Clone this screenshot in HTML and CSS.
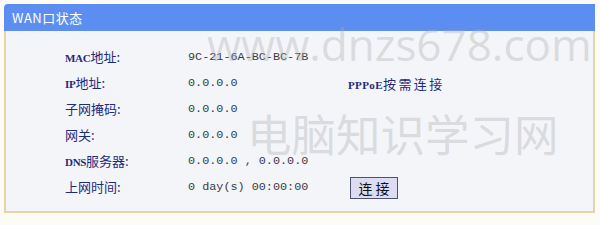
FILE: index.html
```html
<!DOCTYPE html>
<html lang="zh-CN">
<head>
<meta charset="utf-8">
<title>WAN口状态</title>
<link rel="stylesheet" href="styles.css">
</head>
<body>
<div class="panel">
  <div class="header">WAN口状态</div>
  <div class="content">
    <div class="grid">
      <div class="label"><span class="ascii">MAC</span>地址:</div>
      <div class="value">9C-21-6A-BC-BC-7B</div>
      <div class="extra"></div>

      <div class="label"><span class="ascii">IP</span>地址:</div>
      <div class="value">0.0.0.0</div>
      <div class="extra note"><span class="ascii">PPPoE</span>按需连接</div>

      <div class="label">子网掩码:</div>
      <div class="value">0.0.0.0</div>
      <div class="extra"></div>

      <div class="label">网关:</div>
      <div class="value">0.0.0.0</div>
      <div class="extra"></div>

      <div class="label"><span class="ascii">DNS</span>服务器:</div>
      <div class="value">0.0.0.0 , 0.0.0.0</div>
      <div class="extra"></div>

      <div class="label">上网时间:</div>
      <div class="value">0 day(s) 00:00:00</div>
      <div class="extra"><button class="btn" type="button">连 接</button></div>
    </div>
  </div>
  <div class="watermark wm-url">www.dnzs678.com</div>
  <div class="watermark wm-cn">电脑知识学习网</div>
</div>
</body>
</html>
```

FILE: styles.css
```css
* { box-sizing: border-box; }

html, body {
  margin: 0;
  padding: 0;
  background: #fdfbf5;
  width: 600px;
  height: 225px;
  overflow: hidden;
}

body {
  padding: 4px 0 0 4px;
  font-family: "Noto Sans CJK SC", "Liberation Sans", sans-serif;
}

.panel {
  position: relative;
  width: 591px;
  overflow: hidden;
}

.header {
  height: 27px;
  background: #5b8ef0;
  color: #ffffff;
  font-size: 13px;
  line-height: 27px;
  padding-left: 8px;
  border-radius: 4px 0 0 0;
  letter-spacing: 0.5px;
}

.content {
  height: 182px;
  background: #f4f5f9;
  border: 2px solid #e6d4aa;
  border-top: 0;
  padding: 13px 0 0 59px;
}

.grid {
  display: grid;
  grid-template-columns: 123px 160px 1fr;
  grid-auto-rows: 26px;
  align-items: center;
}

.label {
  font-size: 13px;
  color: #1f2b7a;
  line-height: 26px;
}

.ascii {
  font-family: "Liberation Serif", serif;
  font-size: 11px;
  font-weight: bold;
  letter-spacing: -0.3px;
}

.value {
  font-family: "Liberation Mono", monospace;
  font-size: 11.8px;
  color: #3a3a44;
  line-height: 26px;
}

.note {
  font-size: 13px;
  color: #1f2b7a;
  letter-spacing: 2.4px;
}

.note .ascii {
  letter-spacing: 0.4px;
}

.btn {
  margin: 0 0 0 2px;
  width: 48px;
  height: 22px;
  padding: 0;
  background: #dcdcf2;
  border: 1px solid #4d5270;
  font-family: "Noto Sans CJK SC", sans-serif;
  font-size: 14px;
  line-height: 18px;
  color: #111;
}

.watermark {
  position: absolute;
  color: rgba(170, 170, 175, 0.36);
  font-weight: 400;
  white-space: nowrap;
  pointer-events: none;
}

.wm-url {
  left: 203px;
  top: 10px;
  font-family: "Open Sans", "Liberation Sans", sans-serif;
  font-size: 44px;
  line-height: 60px;
  letter-spacing: 0;
}

.wm-cn {
  left: 243px;
  top: 97px;
  font-family: "Noto Sans CJK SC", sans-serif;
  font-size: 44.5px;
  line-height: 64px;
}
```
